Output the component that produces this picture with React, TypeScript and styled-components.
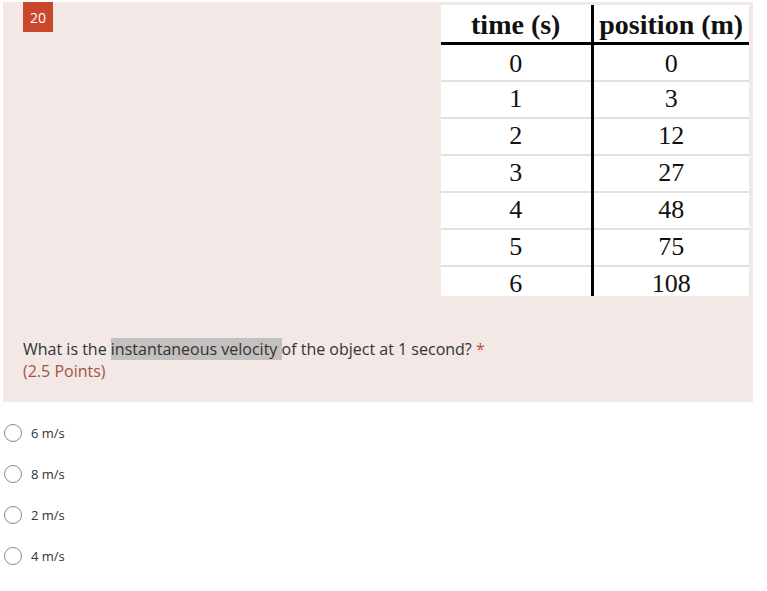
import React from 'react';
import styled, { createGlobalStyle } from 'styled-components';

const Global = createGlobalStyle`
  body {
    margin: 0;
    background: #fff;
    font-family: 'Open Sans', 'Noto Sans', Arial, sans-serif;
  }
`;

const Page = styled.div`
  width: 767px;
  height: 591px;
  padding-top: 2px;
  box-sizing: border-box;
`;

const QuestionPanel = styled.section`
  width: 750px;
  height: 400px;
  margin-left: 3px;
  padding: 0 4px 0 20px;
  box-sizing: border-box;
  background: #f2e8e6;
  display: flex;
  flex-direction: column;
`;

const TopRow = styled.div`
  display: flex;
  justify-content: space-between;
  align-items: flex-start;
`;

const Badge = styled.div`
  width: 30px;
  height: 30px;
  background: #c9472a;
  color: #fff;
  font-size: 14px;
  display: flex;
  align-items: center;
  justify-content: center;
`;

const DataTable = styled.table`
  margin-top: 3px;
  width: 308px;
  table-layout: fixed;
  border-collapse: collapse;
  background: #fff;
  font-family: 'Liberation Serif', 'Times New Roman', serif;
  color: #111;
`;

const HeadCell = styled.th<{ $divider?: boolean }>`
  height: 34px;
  padding: 3px 0 0;
  font-size: 28px;
  font-weight: bold;
  line-height: 34px;
  border-bottom: 3px solid #000;
  border-left: ${(p) => (p.$divider ? '3px solid #000' : 'none')};
  text-align: center;
  white-space: nowrap;
`;

const Cell = styled.td<{ $divider?: boolean; $first?: boolean; $last?: boolean }>`
  height: ${(p) => (p.$last ? '23px' : p.$first ? '27px' : '29px')};
  padding: ${(p) => (p.$first ? '8px 0 0' : '6px 0 0')};
  vertical-align: top;
  font-size: 26px;
  line-height: 22px;
  text-align: center;
  border-top: ${(p) => (p.$first ? 'none' : '2px solid #e4e0e0')};
  border-left: ${(p) => (p.$divider ? '3px solid #000' : 'none')};
`;

const QuestionText = styled.div`
  margin-top: 42px;
  font-size: 16px;
  line-height: 22px;
  color: #333;
`;

const Highlight = styled.span`
  background: #c4c0bf;
`;

const Required = styled.span`
  color: #c9472a;
`;

const Points = styled.div`
  color: #a4533f;
`;

const Options = styled.div`
  padding: 20px 0 0 4px;
  display: flex;
  flex-direction: column;
  gap: 19px;
`;

const Option = styled.label`
  display: flex;
  align-items: center;
  height: 22px;
  font-size: 13px;
  color: #333;
`;

const Radio = styled.span`
  width: 16px;
  height: 16px;
  border: 1px solid #8a8a8a;
  border-radius: 50%;
  background: #fff;
  margin-right: 9px;
`;

const rows: [number, number][] = [
  [0, 0],
  [1, 3],
  [2, 12],
  [3, 27],
  [4, 48],
  [5, 75],
  [6, 108],
];

const answers = ['6 m/s', '8 m/s', '2 m/s', '4 m/s'];

export default function App() {
  return (
    <Page>
      <Global />
      <QuestionPanel>
        <TopRow>
          <Badge>20</Badge>
          <DataTable>
            <colgroup>
              <col style={{ width: 151 }} />
              <col style={{ width: 157 }} />
            </colgroup>
            <thead>
              <tr>
                <HeadCell>time (s)</HeadCell>
                <HeadCell $divider>position (m)</HeadCell>
              </tr>
            </thead>
            <tbody>
              {rows.map(([t, x], i) => {
                const first = i === 0;
                const last = i === rows.length - 1;
                return (
                  <tr key={t}>
                    <Cell $first={first} $last={last}>
                      {t}
                    </Cell>
                    <Cell $divider $first={first} $last={last}>
                      {x}
                    </Cell>
                  </tr>
                );
              })}
            </tbody>
          </DataTable>
        </TopRow>
        <QuestionText>
          What is the <Highlight>instantaneous velocity </Highlight>of the object at 1 second?{' '}
          <Required>*</Required>
          <Points>(2.5 Points)</Points>
        </QuestionText>
      </QuestionPanel>
      <Options>
        {answers.map((a) => (
          <Option key={a}>
            <Radio />
            {a}
          </Option>
        ))}
      </Options>
    </Page>
  );
}
